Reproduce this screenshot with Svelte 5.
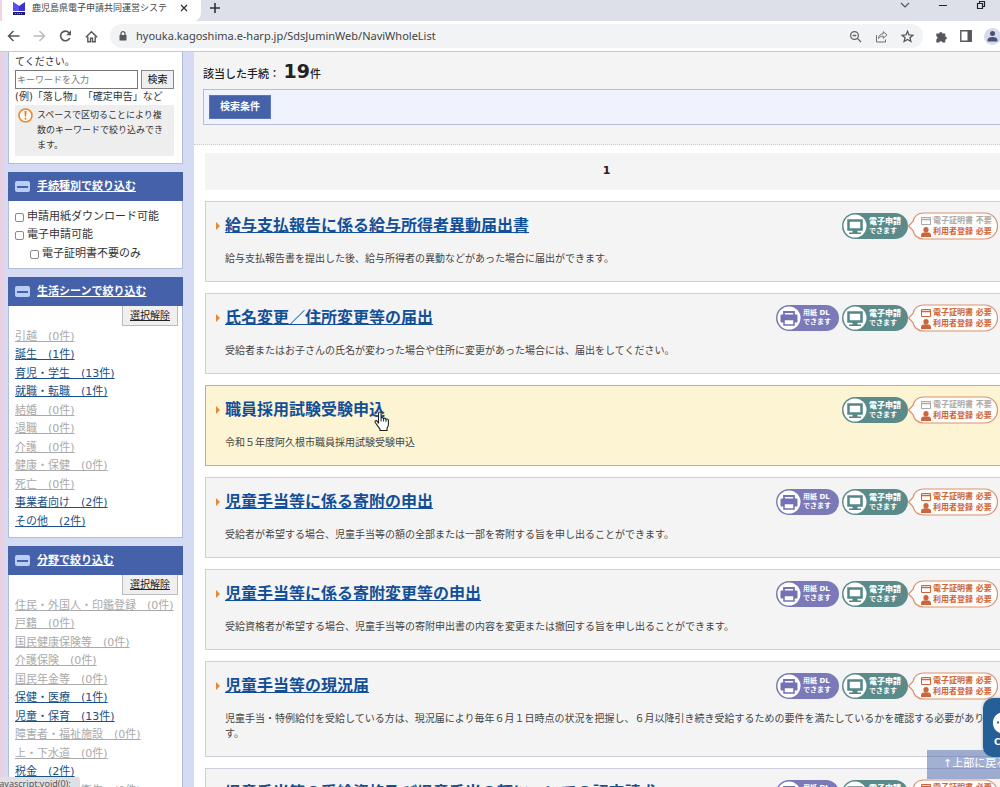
<script>
  const scenes = [
    ['引越', 0], ['誕生', 1], ['育児・学生', 13], ['就職・転職', 1], ['結婚', 0], ['退職', 0],
    ['介護', 0], ['健康・保健', 0], ['死亡', 0], ['事業者向け', 2], ['その他', 2]
  ];
  const fields = [
    ['住民・外国人・印鑑登録', 0], ['戸籍', 0], ['国民健康保険等', 0], ['介護保険', 0], ['国民年金等', 0],
    ['保健・医療', 1], ['児童・保育', 13], ['障害者・福祉施設', 0], ['上・下水道', 0], ['税金', 2], ['ごみ・環境・衛生', 0]
  ];
  const groups = [
    { title: '生活シーンで絞り込む', items: scenes },
    { title: '分野で絞り込む', items: fields }
  ];
  const results = [
    { title: '給与支払報告に係る給与所得者異動届出書', text: '給与支払報告書を提出した後、給与所得者の異動などがあった場合に届出ができます。', form: false, cert: false },
    { title: '氏名変更／住所変更等の届出', text: '受給者またはお子さんの氏名が変わった場合や住所に変更があった場合には、届出をしてください。', form: true, cert: true },
    { title: '職員採用試験受験申込', text: '令和５年度阿久根市職員採用試験受験申込', form: false, cert: false, active: true },
    { title: '児童手当等に係る寄附の申出', text: '受給者が希望する場合、児童手当等の額の全部または一部を寄附する旨を申し出ることができます。', form: true, cert: true },
    { title: '児童手当等に係る寄附変更等の申出', text: '受給資格者が希望する場合、児童手当等の寄附申出書の内容を変更または撤回する旨を申し出ることができます。', form: true, cert: true },
    { title: '児童手当等の現況届', text: '児童手当・特例給付を受給している方は、現況届により毎年６月１日時点の状況を把握し、６月以降引き続き受給するための要件を満たしているかを確認する必要があります。', form: true, cert: true },
    { title: '児童手当等の受給資格及び児童手当の額についての認定請求', text: '', form: true, cert: true }
  ];
</script>

<div class="window">
  <header class="chrome">
    <div class="tabs">
      <div class="tab">
        <svg width="12" height="13" viewBox="0 0 12 13"><path d="M0 0l6 4 6-4v9H0z" fill="#3a32d8" /><path d="M0 0l6 4v5H0z" fill="#5a50ee" /><path d="M0 10h12v3H0z" fill="#1c1b78" /><path d="M2 11.500h8" stroke="#8d8bd8" stroke-dasharray="1 1" /></svg>
        <span class="tab-title">鹿児島県電子申請共同運営システ</span>
        <button class="bare" aria-label="タブを閉じる"><svg width="8" height="8" viewBox="0 0 8 8"><path d="M1 1l6 6M7 1l-6 6" stroke="#333" stroke-width="1.300" /></svg></button>
      </div>
      <button class="bare new" aria-label="新しいタブ"><svg width="12" height="12" viewBox="0 0 12 12"><path d="M6 1v10M1 6h10" stroke="#333" stroke-width="1.600" /></svg></button>
      <div class="win-buttons">
        <button class="bare" aria-label="タブを検索"><svg width="10" height="10" viewBox="0 0 10 10"><path d="M1 3l4 4 4-4" fill="none" stroke="#555" stroke-width="1.200" /></svg></button>
        <button class="bare" aria-label="最小化"><svg width="10" height="10" viewBox="0 0 10 10"><path d="M1 5.500h8" stroke="#222" /></svg></button>
        <button class="bare" aria-label="元に戻す"><svg width="10" height="10" viewBox="0 0 10 10"><path d="M1.500 3.500h5v5h-5zM3.500 3V1.500h5v5H7" fill="none" stroke="#222" stroke-width="1.200" /></svg></button>
      </div>
    </div>
    <div class="toolbar">
      <div class="nav">
        <button class="bare" aria-label="戻る"><svg width="13" height="12" viewBox="0 0 13 12"><path d="M12.500 6H1.500M6.500 1l-5 5 5 5" fill="none" stroke="#55585c" stroke-width="1.500" /></svg></button>
        <button class="bare" aria-label="進む"><svg width="13" height="12" viewBox="0 0 13 12"><path d="M.5 6h11M6.500 1l5 5-5 5" fill="none" stroke="#b9bbbe" stroke-width="1.500" /></svg></button>
        <button class="bare" aria-label="再読み込み"><svg width="13" height="12" viewBox="0 0 13 12"><path d="M10.800 8A4.800 4.800 0 1 1 10 2.700L11 4" fill="none" stroke="#55585c" stroke-width="1.600" /><path d="M12 .3V5.200H7.200z" fill="#55585c" /></svg></button>
        <button class="bare" aria-label="ホーム"><svg width="13" height="13" viewBox="0 0 13 13"><path d="M2.800 6.500v5.200h2.700V8.200h2v3.500h2.700V6.500M.8 7.300l5.700-5.600 5.700 5.600" fill="none" stroke="#55585c" stroke-width="1.400" /></svg></button>
      </div>
      <div class="address">
        <svg width="8" height="10" viewBox="0 0 8 10"><path d="M.5 4h7v5.500h-7z" fill="#55585c" /><path d="M2 4.500V2.700a2 2 0 0 1 4 0v1.800" fill="none" stroke="#55585c" stroke-width="1.200" /></svg>
        <span class="url">hyouka.kagoshima.e-harp.jp/SdsJuminWeb/NaviWholeList</span>
        <svg width="13" height="13" viewBox="0 0 13 13"><circle cx="5.500" cy="5.500" r="3.900" fill="none" stroke="#5f6368" stroke-width="1.300" /><path d="M8.400 8.400l3.600 3.600M3.700 5.500h3.600" stroke="#5f6368" stroke-width="1.300" /></svg>
        <svg width="13" height="13" viewBox="0 0 13 13"><path d="M1.500 5v7h9V9.500M3.500 8.500c.3-3 2-4.500 4.700-4.700V1.700L12 5 8.200 8.300V6.200C6 6.200 4.500 7 3.500 8.500z" fill="none" stroke="#6c7075" /></svg>
        <svg width="13" height="13" viewBox="0 0 13 13"><path d="M6.500 1.300l1.500 3.600 3.900.3-3 2.500 1 3.800-3.400-2-3.400 2 1-3.800-3-2.500 3.900-.3z" fill="none" stroke="#55585c" stroke-width="1.300" /></svg>
      </div>
      <div class="tools">
        <svg width="13" height="13" viewBox="0 0 13 13"><path d="M1.300 3.500h2.900a1.600 1.600 0 1 1 3.200 0h2.900v2.900a1.600 1.600 0 1 1 0 3.200v2.900H7.500a1.700 1.700 0 0 0-3.300 0H1.300V9.400a1.600 1.600 0 0 0 0-3.100z" fill="#55585c" /></svg>
        <svg width="12" height="12" viewBox="0 0 12 12"><path d="M.8.8h10.400v10.400H.8z" fill="none" stroke="#55585c" stroke-width="1.400" /><path d="M7.500 1h4v10h-4z" fill="#55585c" /></svg>
        <svg width="17" height="17" viewBox="0 0 17 17"><circle cx="8.500" cy="8.500" r="8.500" fill="#d5dbec" /><circle cx="8.500" cy="5.500" r="2.500" fill="#4a5270" /><path d="M3.500 13.500V12c0-2 2-3 5-3s5 1 5 3v1.500z" fill="#4a5270" /></svg>
      </div>
    </div>
  </header>

  <div class="page">
    <aside>
      <section class="box search">
        <label for="keyword">てください。</label>
        <div class="search-row">
          <input id="keyword" type="text" placeholder="キーワードを入力" />
          <button>検索</button>
        </div>
        <p class="example">(例)「落し物」「確定申告」など</p>
        <div class="note">
          <svg width="15" height="15" viewBox="0 0 15 15"><circle cx="7.500" cy="7.500" r="6.500" fill="#fffaf2" stroke="#e58a35" stroke-width="1.600" /><path d="M6.500 3h2l-.4 5.500H6.900zM6.700 9.800h1.600v1.700H6.700z" fill="#e07618" /></svg>
          <p>スペースで区切ることにより複数のキーワードで絞り込みできます。</p>
        </div>
      </section>

      <section class="box">
        <h2><span class="minus"></span><a href="#type">手続種別で絞り込む</a></h2>
        <ul class="checks">
          <li><label><input type="checkbox" />申請用紙ダウンロード可能</label></li>
          <li><label><input type="checkbox" />電子申請可能</label></li>
          <li class="sub"><label><input type="checkbox" />電子証明書不要のみ</label></li>
        </ul>
      </section>

      {#each groups as group}
        <section class="box">
          <h2><span class="minus"></span><a href="#group">{group.title}</a></h2>
          <button class="clear">選択解除</button>
          <ul class="links">
            {#each group.items as [name, count]}
              <li><a href="#item" class:empty={count === 0}>{name}　({count}件)</a></li>
            {/each}
          </ul>
        </section>
      {/each}
    </aside>

    <main>
      <div class="summary">
        <p class="count">該当した手続： <strong>19</strong>件</p>
        <div class="condition"><button>検索条件</button></div>
      </div>
      <div class="results">
        <nav class="pager">1</nav>
        {#each results as r}
          <article class:active={r.active}>
            <div class="head">
              <svg class="mark" width="4" height="8" viewBox="0 0 4 8"><path d="M0 0l4 4-4 4z" fill="#e58a35" /></svg>
              <h3><a href="#detail">{r.title}</a>{#if r.active}<svg class="cursor" width="16" height="21" viewBox="0 0 16 21"><path d="M4.500 12.500V2.500c0-2 2.600-2 2.600 0v5c.3-1.300 2.300-1.200 2.500.3.500-1 2.200-.8 2.400.6.700-.8 2.300-.5 2.400 1v4.400c0 1.500-1.400 2.500-1.400 4.200v1.500H6v-1.500c-1.500-2-3.500-4.500-4.700-6.500-.8-1.600 1-2.500 2-1.200z" fill="#fff" stroke="#222" stroke-width="1.100" /><path d="M7.100 7.500v3M9.600 8v2.500M12 8.500v2.300" stroke="#222" /></svg>{/if}</h3>
              <div class="badges">
                {#if r.form}
                  <div class="badge form">
                    <svg width="24" height="24" viewBox="0 0 24 24"><circle cx="12" cy="12" r="11.500" fill="#fff" /><path d="M7 9V6h10v3" fill="none" stroke="#7472b4" stroke-width="1.800" /><rect x="3.500" y="8.500" width="17" height="8" rx="1" fill="#7472b4" /><path d="M7 13.500h10v5.500H7z" fill="#fff" stroke="#7472b4" stroke-width="1.500" /></svg>
                    <span>用紙 DL<br />できます</span>
                  </div>
                {/if}
                <div class="badge online">
                  <svg width="24" height="24" viewBox="0 0 24 24"><circle cx="12" cy="12" r="11.500" fill="#fff" /><path d="M5.500 6.500h13v9h-13z" fill="none" stroke="#558786" stroke-width="2.500" /><path d="M9.500 16h5v2.500H18V20H6v-1.500h3.500z" fill="#558786" /></svg>
                  <span><b>電子申請</b><br />できます</span>
                </div>
                <div class="need">
                  <svg class="outline" viewBox="0 0 92 28" width="92" height="28"><path d="M17 1h60c18 0 18 26 0 26H17C10 27 7 23 6 18.500L1.500 14 6 9.500C7 5 10 1 17 1z" fill="#fffdfb" stroke="#d9916f" stroke-width="1.200" /></svg>
                  <div class="need-line" class:off={!r.cert}>
                    <svg width="10" height="8" viewBox="0 0 10 8"><path d="M.5.5h9v7h-9z" fill="none" stroke="currentColor" /><path d="M.5 2.500h9" stroke="currentColor" stroke-width="1.500" /></svg>
                    電子証明書 {r.cert ? '必要' : '不要'}
                  </div>
                  <div class="need-line">
                    <svg width="10" height="10" viewBox="0 0 10 10"><circle cx="5" cy="2.700" r="2.600" fill="currentColor" /><path d="M0 10V8c0-2 2-2.700 5-2.700s5 .7 5 2.700v2z" fill="currentColor" /></svg>
                    利用者登録 必要
                  </div>
                </div>
              </div>
            </div>
            <p>{r.text}</p>
          </article>
        {/each}
      </div>
    </main>
  </div>

  <a class="to-top" href="#top">↑上部に戻る</a>
  <button class="chat">
    <svg width="30" height="26" viewBox="0 0 30 26"><path d="M13 1h4c16 0 16 22 0 22h-2l-5 3v-3.500C-3 20-2 1 13 1z" fill="#fff" /><path d="M5 11.500h2M14 11.500h2M22 11.500h2" stroke="#245f98" stroke-width="2" /></svg>
    <span>CHAT</span>
  </button>
  <div class="status">javascript:void(0);</div>
</div>

<style>
  :global(body) { margin: 0; }
  .window, .window * { box-sizing: border-box; }
  .window {
    position: relative;
    height: 100vh;
    overflow: hidden;
    background: #fff;
    color: #333;
    font: 11px/18px "DejaVu Sans", "Noto Sans CJK JP", sans-serif;
    text-spacing-trim: space-all;
  }
  h2, h3, p, ul { margin: 0; padding: 0; font-weight: normal; }
  ul { list-style: none; }
  svg { display: block; flex: none; }
  button, input { font: inherit; color: inherit; }
  .bare { display: flex; padding: 0; border: 0; background: none; }

  .chrome { position: relative; z-index: 2; }
  .tabs { display: flex; align-items: flex-start; height: 21px; background: #dde0e8; border-left: 2px solid #f0d6e0; }
  .tab { display: flex; align-items: center; gap: 7px; width: 199px; height: 21px; padding: 0 13px 5px 11px; background: #fff; border-radius: 0 0 8px 0; }
  .tab-title { flex: 1; overflow: hidden; white-space: nowrap; font-size: 9px; line-height: 16px; color: #444; }
  .new { margin: 2px 0 0 8px; }
  .win-buttons { display: flex; gap: 28px; margin: 0 14px 0 auto; }
  .toolbar { display: flex; align-items: center; height: 31px; padding-left: 7px; background: #fff; border-bottom: 1px solid #c9c9cd; }
  .nav { display: flex; gap: 13px; }
  .address { display: flex; flex: 1; align-items: center; gap: 13px; height: 24px; margin-left: 12px; padding: 0 9px; border-radius: 12px; background: #f1f3f4; }
  .url { flex: 1; margin-left: -4px; font: 11px/18px "Noto Sans", sans-serif; color: #444; }
  .tools { display: flex; align-items: center; gap: 12px; margin: 0 -1px 0 12px; }

  .page { display: flex; align-items: flex-start; }
  aside {
    display: flex;
    flex: none;
    flex-direction: column;
    gap: 8px;
    width: 194px;
    padding: 0 11px 20px 8px;
    background: linear-gradient(90deg, #edd0e0 0, #e6d2e6 3px, #d5dbf3 6px);
  }
  .box { background: #fff; border: 1px solid #b4bcdc; border-top: 0; }
  .search { padding: 1px 8px 7px 6px; font-size: 10px; }
  .search label { display: block; line-height: 17px; }
  .search-row { display: flex; gap: 3px; }
  .search-row input { flex: 1; min-width: 0; height: 19px; padding: 0 1px; border: 1px solid #777; border-radius: 0; background: #fff; font-size: 9px; }
  .search-row input::placeholder { color: #777; }
  .search-row button { width: 33px; height: 19px; padding: 0; border: 1px solid #888; background: #efefef; color: #111; line-height: 16px; }
  .example { line-height: 16px; white-space: nowrap; }
  .note { display: flex; gap: 4px; padding: 3px 10px 3px 3px; background: #eee; font-size: 9px; line-height: 15px; }
  h2 { display: flex; align-items: center; gap: 7px; height: 29px; margin: 0 -1px; padding-left: 7px; background: #4561a9; font-size: 11px; font-weight: bold; }
  h2 a { color: #fff; text-underline-offset: 1px; }
  .minus { display: flex; align-items: center; width: 15px; height: 11px; padding: 0 2px; border-radius: 2px; background: #b9cdf5; }
  .minus::before { content: ""; flex: 1; height: 2px; background: #4561a9; }
  .checks { padding: 7px 6px 5px; }
  .checks li, .links li { height: 18px; white-space: nowrap; }
  .checks li:nth-child(even), .links li:nth-child(even) { height: 19px; }
  .checks .sub { margin-left: 15px; }
  .checks label { display: flex; align-items: center; gap: 3px; }
  .checks input { appearance: none; width: 9px; height: 9px; margin: 0; border: 1px solid #8a8a8a; border-radius: 2px; background: #fff; }
  .clear { display: block; height: 20px; margin: 0 4px 0 auto; padding: 0 7px; border: 1px solid #bbb; border-top: 0; background: #efefef; color: #222; font-size: 10px; line-height: 18px; text-decoration: underline; }
  .links { padding: 2px 6px 6px; }
  .links a { color: #1b5187; text-underline-offset: 1px; }
  .links a.empty { color: #aaa; }

  main { flex: 1; min-width: 0; background: #fff; }
  .summary { height: 93px; padding: 7px 0 0 9px; background: #f4f4f4; border-bottom: 1px dotted #ccc; overflow: hidden; }
  .count { height: 24px; font-weight: 500; line-height: 24px; color: #222; }
  .count strong { font-size: 19px; }
  .condition { margin-top: 6px; padding: 5px; border: 1px solid #b4bcdc; border-right: 0; background: #f0f3fe; }
  .condition button { display: block; height: 24px; padding: 0 10px; border: 1px solid #5d76b8; background: #4561a9; color: #fff; font-size: 10px; font-weight: bold; line-height: 20px; }
  .results { display: flex; flex-direction: column; gap: 11px; margin: 8px -8px 0 11px; }
  .pager { height: 37px; background: #f4f4f4; color: #222; font-weight: bold; line-height: 36px; text-align: center; }
  article { padding: 10px 8px 15px 10px; border: 1px solid #cfcfda; background: #f4f4f4; }
  article.active { border-color: #d8b050; background: #fcf4d3; }
  .head { display: flex; align-items: flex-start; gap: 5px; height: 28px; }
  .mark { margin-top: 10px; }
  h3 { position: relative; font-size: 16px; font-weight: bold; line-height: 28px; white-space: nowrap; }
  h3 a { color: #134f98; font-weight: bold; text-underline-offset: 1px; }
  .active h3 a { text-decoration: none; }
  .cursor { position: absolute; right: -5px; top: 15px; }
  article p { min-height: 15px; margin-top: 11px; padding-left: 9px; color: #444; font-size: 10px; line-height: 15px; }
  .badges { display: flex; gap: 3px; margin-left: auto; }
  .badge { display: flex; align-items: center; gap: 2px; height: 26px; margin-top: 1px; padding: 1px; border-radius: 13px; color: #fff; font-size: 7px; font-weight: bold; line-height: 9px; white-space: nowrap; }
  .badge b { font-size: 8px; }
  .form { width: 63px; background: #7b79b9; }
  .online { width: 66px; background: #5a8b8a; }
  .need { position: relative; width: 88px; height: 28px; padding: 3px 0 0 10px; }
  .outline { position: absolute; right: 0; top: 0; }
  .need-line { position: relative; display: flex; align-items: center; gap: 2px; height: 11px; color: #cc653c; font-size: 8px; font-weight: bold; line-height: 11px; white-space: nowrap; }
  .need-line.off { color: #aaa; }

  .to-top { position: absolute; right: 0; bottom: 8px; width: 73px; height: 29px; padding-left: 16px; overflow: hidden; background: rgba(69, 97, 169, 0.5); color: #fff; font-size: 11px; line-height: 28px; text-decoration: none; white-space: nowrap; }
  .chat { position: absolute; right: -30px; bottom: 30px; display: flex; flex-direction: column; align-items: flex-start; width: 47px; height: 59px; padding: 13px 8px 0 9px; border: 0; border-radius: 10px; background: #245f98; color: #fff; font-size: 9px; font-weight: bold; line-height: 10px; box-shadow: 0 0 3px #9ab; }
  .chat span { margin: 0 0 0 2px; }
  .status { position: absolute; left: 0; bottom: 0; width: 80px; height: 10px; overflow: hidden; border-radius: 0 3px 0 0; background: #dee0e6; color: #555; font: 9px/14px "Noto Sans", sans-serif; text-indent: -3px; white-space: nowrap; }
</style>
